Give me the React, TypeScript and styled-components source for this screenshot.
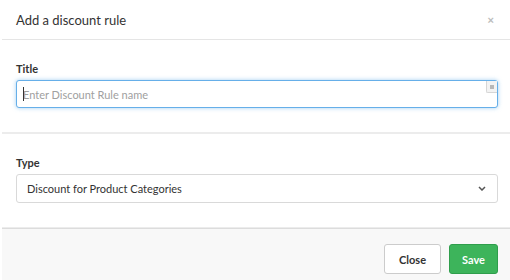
import styled, { createGlobalStyle } from 'styled-components';

const GlobalStyle = createGlobalStyle`
  html, body {
    margin: 0;
    padding: 0;
    background: #ffffff;
  }
  body {
    font-family: Lato, "Noto Sans", "Liberation Sans", sans-serif;
    color: #333333;
  }
`;

const Modal = styled.div`
  width: 508px;
  height: 280px;
  margin-left: 2px;
  display: flex;
  flex-direction: column;
  background: #ffffff;
`;

const Header = styled.div`
  height: 40px;
  display: flex;
  align-items: center;
  justify-content: space-between;
  padding: 0 16px 0 14px;
  border-bottom: 1px solid #e5e5e5;
  box-sizing: border-box;
`;

const Heading = styled.h4`
  margin: 0;
  font-size: 13px;
  font-weight: 400;
  color: #333333;
`;

const CloseX = styled.button`
  border: none;
  background: none;
  padding: 0;
  font-size: 11px;
  font-weight: 700;
  line-height: 1;
  color: #bdbdbd;
  cursor: pointer;
  margin-top: 2px;
`;

const Section = styled.div`
  padding: 21px 12px 24px 14px;
  display: flex;
  flex-direction: column;
  border-bottom: 2px solid #ececec;
`;

const Label = styled.label`
  font-size: 11px;
  font-weight: 700;
  color: #333333;
  line-height: 16px;
  margin-bottom: 3px;
`;

const InputWrap = styled.div`
  position: relative;
  display: flex;
`;

const TextInput = styled.input`
  flex: 1;
  height: 28px;
  box-sizing: border-box;
  border: 1px solid #66afe9;
  border-radius: 3px;
  box-shadow: 0 0 4px rgba(102, 175, 233, 0.6);
  padding: 0 6px;
  font-family: inherit;
  font-size: 11px;
  color: #333333;
  outline: none;

  &::placeholder {
    color: #a0a0a0;
  }
`;

const Caret = styled.span`
  position: absolute;
  left: 7px;
  top: 7px;
  width: 1px;
  height: 14px;
  background: #333333;
`;

const Widget = styled.span`
  position: absolute;
  right: 1px;
  top: 1px;
  width: 10px;
  height: 11px;
  background: #f3f3f3;
  border-left: 1px solid #d6d6d6;
  border-bottom: 1px solid #d6d6d6;
  border-bottom-left-radius: 2px;
  display: flex;
  align-items: center;
  justify-content: center;

  &::after {
    content: '';
    width: 4px;
    height: 4px;
    background: #b8b8b8;
  }
`;

const SelectBox = styled.div`
  height: 29px;
  box-sizing: border-box;
  border: 1px solid #d9d9d9;
  border-radius: 3px;
  display: flex;
  align-items: center;
  justify-content: space-between;
  padding: 0 11px 0 10px;
  font-size: 11px;
  color: #333333;
`;

const Footer = styled.div`
  flex: 1;
  background: #f8f8f8;
  border-top: 1px solid #dcdcdc;
  margin-top: -1px;
  display: flex;
  justify-content: flex-end;
  align-items: flex-start;
  gap: 8px;
  padding: 15px 12px 0 0;
`;

const Button = styled.button<{ $primary?: boolean }>`
  height: 30px;
  padding: 0 ${(p) => (p.$primary ? '12px' : '14px')};
  border-radius: 3px;
  font-family: inherit;
  font-size: 11px;
  font-weight: 700;
  cursor: pointer;
  border: 1px solid ${(p) => (p.$primary ? '#2f9e4c' : '#cccccc')};
  background: ${(p) => (p.$primary ? '#3db45b' : '#ffffff')};
  color: ${(p) => (p.$primary ? '#ffffff' : '#333333')};
`;

export default function App() {
  return (
    <>
      <GlobalStyle />
      <Modal>
        <Header>
          <Heading>Add a discount rule</Heading>
          <CloseX aria-label="Close">×</CloseX>
        </Header>

        <Section>
          <Label>Title</Label>
          <InputWrap>
            <TextInput type="text" placeholder="Enter Discount Rule name" />
            <Caret />
            <Widget />
          </InputWrap>
        </Section>

        <Section>
          <Label>Type</Label>
          <SelectBox>
            <span>Discount for Product Categories</span>
            <svg width="8" height="5" viewBox="0 0 8 5">
              <path d="M1 1l3 3 3-3" fill="none" stroke="#555" strokeWidth="1.5" />
            </svg>
          </SelectBox>
        </Section>

        <Footer>
          <Button>Close</Button>
          <Button $primary>Save</Button>
        </Footer>
      </Modal>
    </>
  );
}
